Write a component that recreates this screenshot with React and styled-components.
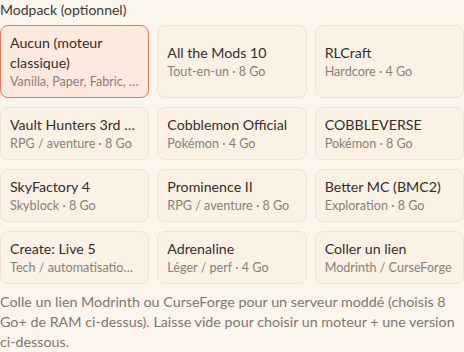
import React, { useState } from "react";
import styled, { createGlobalStyle } from "styled-components";

const Global = createGlobalStyle`
  html, body { margin: 0; padding: 0; background: #fcf5ec; }
  body { font-family: "Lato", "Noto Sans", sans-serif; overflow: hidden; }
`;

const Wrap = styled.div`
  width: 464px;
  display: flex;
  flex-direction: column;
`;

const Label = styled.div`
  font-size: 14px;
  line-height: 20px;
  color: #3f3731;
  margin-bottom: 5px;
`;

const Grid = styled.div`
  display: grid;
  grid-template-columns: repeat(3, 1fr);
  gap: 9px 8px;
`;

const Card = styled.button`
  font-family: inherit;
  text-align: left;
  display: flex;
  flex-direction: column;
  justify-content: center;
  min-width: 0;
  padding: 7px 9px 6px;
  border-radius: 8px;
  border: 1px solid ${(p) => (p.$active ? "#e07c5e" : "#f1e3d3")};
  background: ${(p) => (p.$active ? "#fde9de" : "#fbf1e5")};
  cursor: pointer;
`;

const Title = styled.div`
  font-size: 14.2px;
  line-height: 20px;
  font-weight: 400;
  color: #352e29;
  overflow: hidden;
  text-overflow: ellipsis;
  white-space: ${(p) => (p.$wrap ? "normal" : "nowrap")};
`;

const Sub = styled.div`
  font-size: 12.6px;
  line-height: 18px;
  color: #8b8077;
  overflow: hidden;
  text-overflow: ellipsis;
  white-space: nowrap;
`;

const Help = styled.p`
  margin: 8px 0 0;
  font-size: 14.3px;
  line-height: 20px;
  color: #82776e;
`;

const packs = [
  ["Aucun (moteur classique)", "Vanilla, Paper, Fabric, Forge"],
  ["All the Mods 10", "Tout-en-un · 8 Go"],
  ["RLCraft", "Hardcore · 4 Go"],
  ["Vault Hunters 3rd Edition", "RPG / aventure · 8 Go"],
  ["Cobblemon Official", "Pokémon · 4 Go"],
  ["COBBLEVERSE", "Pokémon · 8 Go"],
  ["SkyFactory 4", "Skyblock · 8 Go"],
  ["Prominence II", "RPG / aventure · 8 Go"],
  ["Better MC (BMC2)", "Exploration · 8 Go"],
  ["Create: Live 5", "Tech / automatisation · 8 Go"],
  ["Adrenaline", "Léger / perf · 4 Go"],
  ["Coller un lien", "Modrinth / CurseForge"],
];

export default function App() {
  const [sel, setSel] = useState(0);
  return (
    <Wrap>
      <Global />
      <Label>Modpack (optionnel)</Label>
      <Grid>
        {packs.map(([t, s], i) => (
          <Card key={t} $active={sel === i} onClick={() => setSel(i)}>
            <Title $wrap={i === 0}>{t}</Title>
            <Sub>{s}</Sub>
          </Card>
        ))}
      </Grid>
      <Help>
        Colle un lien Modrinth ou CurseForge pour un serveur moddé (choisis 8
        Go+ de RAM ci-dessus). Laisse vide pour choisir un moteur + une version
        ci-dessous.
      </Help>
    </Wrap>
  );
}
